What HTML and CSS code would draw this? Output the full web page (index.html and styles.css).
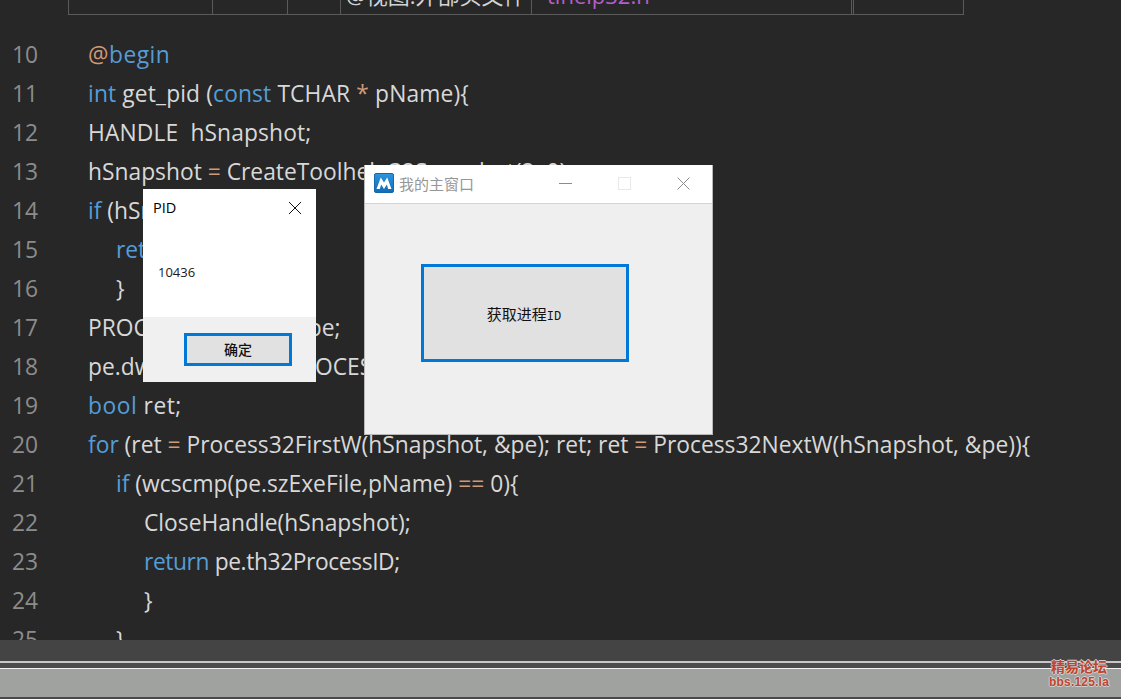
FILE: index.html
```html
<!DOCTYPE html>
<html lang="zh">
<head>
<meta charset="utf-8">
<title>获取进程ID</title>
<link rel="stylesheet" href="styles.css">
</head>
<body>
<div class="screen">
  <main class="editor">
    <div class="table-clip">
      <div class="cell c1"></div>
      <div class="cell c2"></div>
      <div class="cell c3"></div>
      <div class="cell c4">@视图:外部头文件</div>
      <div class="cell c5 purple">tlhelp32.h</div>
      <div class="cell c6"></div>
    </div>
    <div class="code">
      <div class="line"><span class="num">10</span><span class="src sp-wide"><span class="o">@</span><span class="k">begin</span></span></div>
      <div class="line"><span class="num">11</span><span class="src sp-slight"><span class="k">int</span> get_pid (<span class="k">const</span> TCHAR <span class="o">*</span> pName){</span></div>
      <div class="line"><span class="num">12</span><span class="src sp-slight">HANDLE&nbsp; hSnapshot;</span></div>
      <div class="line"><span class="num">13</span><span class="src">hSnapshot <span class="o">=</span> CreateToolhelp32Snapshot(2, 0);</span></div>
      <div class="line"><span class="num">14</span><span class="src"><span class="k">if</span> (hSnapshot <span class="o">==</span> 0){</span></div>
      <div class="line"><span class="num">15</span><span class="src i1"><span class="k">return</span> 0;</span></div>
      <div class="line"><span class="num">16</span><span class="src i1">}</span></div>
      <div class="line"><span class="num">17</span><span class="src">PROCESSENTRY32W pe;</span></div>
      <div class="line"><span class="num">18</span><span class="src">pe.dwSize <span class="o">=</span> sizeof(PROCESSENTRY32W);</span></div>
      <div class="line"><span class="num">19</span><span class="src sp-wide"><span class="k">bool</span> ret;</span></div>
      <div class="line"><span class="num">20</span><span class="src"><span class="k">for</span> (ret <span class="o">=</span> Process32FirstW(hSnapshot, &amp;pe); ret; ret <span class="o">=</span> Process32NextW(hSnapshot, &amp;pe)){</span></div>
      <div class="line"><span class="num">21</span><span class="src i1"><span class="k">if</span> (wcscmp(pe.szExeFile,pName) <span class="o">==</span> 0){</span></div>
      <div class="line"><span class="num">22</span><span class="src i2">CloseHandle(hSnapshot);</span></div>
      <div class="line"><span class="num">23</span><span class="src i2 sp-narrow"><span class="k">return</span> pe.th32ProcessID;</span></div>
      <div class="line"><span class="num">24</span><span class="src i2">}</span></div>
      <div class="line"><span class="num">25</span><span class="src i1">}</span></div>
    </div>
  </main>
  <footer class="bottom">
    <div class="bar-dark"></div>
    <div class="bar-line"></div>
    <div class="bar-mid"></div>
    <div class="bar-white"></div>
    <div class="bar-gray"></div>
    <div class="bar-end"></div>
  </footer>

  <section class="msgbox">
    <header class="msg-head">
      <span class="msg-title">PID</span>
      <svg class="msg-x" width="14" height="14" viewBox="0 0 14 14"><path d="M1 1L13 13M13 1L1 13" stroke="#111" stroke-width="1" fill="none"/></svg>
    </header>
    <div class="msg-body">10436</div>
    <div class="msg-foot"><div class="btn msg-btn">确定</div></div>
  </section>

  <section class="mainwin">
    <header class="win-head">
      <svg class="logo" width="20" height="20" viewBox="0 0 20 20">
        <defs><linearGradient id="lg" x1="0" y1="0" x2="0" y2="1"><stop offset="0" stop-color="#2c95de"/><stop offset="1" stop-color="#0f6db5"/></linearGradient></defs>
        <rect x="0.5" y="0.5" width="19" height="19" rx="1.5" fill="url(#lg)" stroke="#1668a8"/>
        <path d="M2.5 16L6.8 4.5L10 9.5L13.2 4.5L17.5 16H14.2L12.8 11.5L10 16L7.2 11.5L5.8 16Z" fill="#fff"/>
      </svg>
      <span class="win-title">我的主窗口</span>
      <svg class="ctl ctl-min" width="13" height="13" viewBox="0 0 13 13"><path d="M0 6.5H13" stroke="#8c8c8c" fill="none"/></svg>
      <svg class="ctl ctl-max" width="13" height="13" viewBox="0 0 13 13"><rect x="0.5" y="0.5" width="12" height="12" stroke="#e8e8e8" fill="none"/></svg>
      <svg class="ctl ctl-close" width="13" height="13" viewBox="0 0 13 13"><path d="M0.5 0.5L12.5 12.5M12.5 0.5L0.5 12.5" stroke="#8c8c8c" fill="none"/></svg>
    </header>
    <div class="win-body"><div class="btn win-btn"><span>获取进程<span class="mono">ID</span></span></div></div>
  </section>

  <div class="mark"><div class="mark-cn">精易论坛</div><div class="mark-en">bbs.125.la</div></div>
</div>
</body>
</html>
```
FILE: styles.css
```css
* { box-sizing: border-box; }
html, body { margin: 0; padding: 0; }
body { background: #272727; overflow: hidden; }
.screen { position: relative; width: 1121px; height: 699px; overflow: hidden; display: flex; flex-direction: column; font-family: "Open Sans", "Noto Sans CJK SC", sans-serif; }

.editor { height: 640px; overflow: hidden; background: #272727; flex: none; }
.table-clip { display: flex; align-items: flex-end; height: 15px; margin-left: 68px; width: 896px; border: 1px solid #5a5a5a; border-top: 0; overflow: hidden; }
.cell { height: 40px; border-right: 1px solid #5a5a5a; flex: none; color: #d4d4d4; font-size: 22px; line-height: 24px; padding-top: 9px; white-space: nowrap; overflow: hidden; }
.c1 { width: 144px; }
.c2 { width: 75px; }
.c3 { width: 53px; }
.c4 { width: 191px; padding-left: 5px; }
.c5 { width: 320px; padding-left: 15px; }
.c6 { flex: 1; border-right: 0; border-left: 1px solid #5a5a5a; margin-left: 1px; }
.purple { color: #b45fc8; }

.code { padding-top: 20px; }
.line { display: flex; height: 39px; line-height: 39px; font-size: 22.8px; white-space: pre; color: #d8d8d8; }
.num { width: 88px; padding-left: 12px; color: #8c8c8c; flex: none; letter-spacing: 0; }
.src { flex: none; }
.i1 { margin-left: 28px; }
.i2 { margin-left: 56px; }
.sp-wide { letter-spacing: 0.5px; }
.sp-slight { letter-spacing: 0.13px; }
.sp-narrow { letter-spacing: -0.4px; }
.k { color: #569cd6; }
.o { color: #d19a76; }

.bottom { flex: 1; display: flex; flex-direction: column; }
.bar-dark { height: 21px; background: #444; }
.bar-line { height: 2px; background: #c8c8c8; }
.bar-mid { height: 5px; background: #4c4c4c; }
.bar-white { height: 1px; background: #f2f2f2; }
.bar-gray { flex: 1; background: #a0a2a0; }
.bar-end { height: 2px; background: #4a4a4a; }

.msgbox { position: absolute; left: 143px; top: 189px; width: 173px; height: 193px; background: #fff; display: flex; flex-direction: column; }
.msg-head { height: 38px; display: flex; align-items: center; justify-content: space-between; padding: 0 14px 0 10px; }
.msg-title { font-size: 14.5px; color: #000; padding-bottom: 2px; }
.msg-body { height: 90px; padding: 36px 0 0 15px; font-size: 13px; line-height: 18px; color: #1a1a1a; }
.msg-foot { flex: 1; background: #f0f0f0; display: flex; justify-content: flex-end; align-items: flex-start; padding: 16px 24px 0 0; }
.btn { display: flex; align-items: center; justify-content: center; background: #e1e1e1; border-style: solid; border-color: #0078d7; color: #111; }
.msg-btn { width: 108px; height: 33px; border-width: 3px; font-size: 14px; font-weight: 500; padding-bottom: 2px; }

.mainwin { position: absolute; left: 364px; top: 165px; width: 349px; height: 270px; background: #efefef; border: 1px solid #b8b8b8; border-top: 0; display: flex; flex-direction: column; }
.win-head { height: 39px; background: #fff; border-bottom: 1px solid #d4d4d4; display: flex; align-items: center; padding: 0 0 2px 9px; flex: none; }
.logo { flex: none; }
.win-title { margin-left: 5px; font-size: 15px; color: #979797; width: 160px; white-space: nowrap; }
.ctl { flex: none; }
.ctl-min { margin-left: 0; }
.ctl-max { margin-left: 46px; }
.ctl-close { margin-left: 46px; }
.win-body { flex: 1; padding: 60px 0 0 56px; }
.win-btn { width: 208px; height: 98px; border-width: 3px; font-size: 15px; padding-right: 2px; }
.mono { font-family: "Liberation Mono", monospace; font-size: 12px; }

.mark { position: absolute; right: 12px; top: 659px; text-align: center; color: #c0452c; font-weight: 700; text-shadow: 1px 0 0 #d0d0d0, -1px 0 0 #d0d0d0, 0 1px 0 #d0d0d0, 0 -1px 0 #d0d0d0; }
.mark-cn { font-size: 14px; line-height: 16px; }
.mark-en { font-size: 12px; line-height: 15px; font-family: "Liberation Sans", sans-serif; font-weight: 700; letter-spacing: 0.2px; }
```
